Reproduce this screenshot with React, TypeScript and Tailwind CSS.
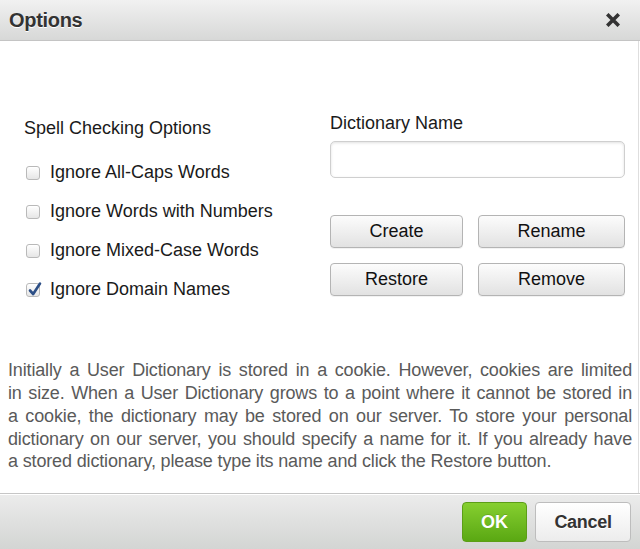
import React from "react";

const font = { fontFamily: '"Liberation Sans", Arial, Helvetica, sans-serif' };

function Box({ checked }: { checked?: boolean }) {
  return (
    <span className="relative inline-block w-[14px] h-[14px] rounded-[3px] border border-[#b9b9b9] bg-gradient-to-b from-white to-[#e6e6e6] shadow-[inset_0_1px_0_#fff]">
      {checked && (
        <svg className="absolute left-[1px] top-[-3px]" width="14" height="16" viewBox="0 0 14 16">
          <path d="M2 9.5 L5.2 13 L12 2.5" fill="none" stroke="#2d4f86" strokeWidth="2.6" strokeLinecap="round" strokeLinejoin="round" />
        </svg>
      )}
    </span>
  );
}

function Row({ label, checked }: { label: string; checked?: boolean }) {
  return (
    <div className="h-[39px] flex items-center">
      <span className="ml-[26px] mr-[10px] flex items-center"><Box checked={checked} /></span>
      <span className="text-[18px] text-[#1a1a1a]">{label}</span>
    </div>
  );
}

function Btn({ label, w }: { label: string; w: string }) {
  return (
    <button className={`${w} h-[33px] rounded-[4px] border border-[#b4b4b4] bg-gradient-to-b from-[#fcfcfc] to-[#e2e2e2] text-[18px] text-[#111] shadow-[0_1px_0_rgba(0,0,0,0.05)]`}>
      {label}
    </button>
  );
}

export default function App() {
  const justify = "block text-justify [text-align-last:justify] whitespace-nowrap";
  return (
    <div className="w-[640px] h-[549px] bg-white flex flex-col overflow-hidden" style={font}>
      {/* Title bar */}
      <div className="h-[41px] shrink-0 flex items-center justify-between bg-gradient-to-b from-[#f1f1f1] to-[#d7d8d7] border-b border-[#c4c4c4]">
        <span className="ml-[9px] text-[20px] font-bold text-[#333] [text-shadow:0_1px_0_#fff] tracking-[-0.3px]">Options</span>
        <svg className="mr-[20px]" width="14" height="14" viewBox="0 0 14 14">
          <path d="M2.5 2.5 L11.5 11.5 M11.5 2.5 L2.5 11.5" stroke="#333" strokeWidth="3.6" strokeLinecap="square" />
        </svg>
      </div>

      {/* Body */}
      <div className="flex-1 w-[639px] border-r border-[#dedede] flex flex-col">
        <div className="flex">
          <div className="w-[330px]">
            <div className="pl-[24px] pt-[77px] h-[97px] leading-[20px] text-[18px] text-[#1a1a1a]">Spell Checking Options</div>
            <div className="mt-[15px]">
              <Row label="Ignore All-Caps Words" />
              <Row label="Ignore Words with Numbers" />
              <Row label="Ignore Mixed-Case Words" />
              <Row label="Ignore Domain Names" checked />
            </div>
          </div>
          <div className="flex flex-col">
            <div className="pt-[72px] leading-[20px] text-[18px] text-[#1a1a1a]">Dictionary Name</div>
            <input className="mt-[8px] w-[295px] h-[37px] rounded-[5px] border border-[#cfcfcf] bg-white shadow-[inset_0_1px_3px_rgba(0,0,0,0.12)] outline-none" />
            <div className="mt-[37px] flex gap-[15px]">
              <Btn label="Create" w="w-[133px]" />
              <Btn label="Rename" w="w-[147px]" />
            </div>
            <div className="mt-[15px] flex gap-[15px]">
              <Btn label="Restore" w="w-[133px]" />
              <Btn label="Remove" w="w-[147px]" />
            </div>
          </div>
        </div>
        <div className="mt-auto mb-[20px] ml-[8px] w-[624px] text-[18px] leading-[22.75px] text-[#5a5a5a] tracking-[-0.15px]">
          <span className={justify}>Initially a User Dictionary is stored in a cookie. However, cookies are limited</span>
          <span className={justify}>in size. When a User Dictionary grows to a point where it cannot be stored in</span>
          <span className={justify}>a cookie, the dictionary may be stored on our server. To store your personal</span>
          <span className={justify}>dictionary on our server, you should specify a name for it. If you already have</span>
          <span className="block whitespace-nowrap">a stored dictionary, please type its name and click the Restore button.</span>
        </div>
      </div>

      {/* Footer */}
      <div className="h-[56px] shrink-0 border-t border-[#c6c6c6] shadow-[inset_0_1px_0_#fff] bg-gradient-to-b from-[#ececec] to-[#d3d5d3] flex items-start justify-end pt-[8px] pr-[9px] gap-[8px]">
        <button className="w-[65px] h-[40px] rounded-[4px] border border-[#5c9e17] bg-gradient-to-b from-[#86cf2f] to-[#5aa812] text-white font-bold text-[18px] [text-shadow:0_-1px_0_rgba(0,0,0,0.15)]">
          OK
        </button>
        <button className="w-[96px] h-[40px] rounded-[4px] border border-[#bdbdbd] bg-gradient-to-b from-white to-[#ececec] text-[#333] font-bold text-[18px] tracking-[-0.3px] [text-shadow:0_1px_0_#fff]">
          Cancel
        </button>
      </div>
    </div>
  );
}
